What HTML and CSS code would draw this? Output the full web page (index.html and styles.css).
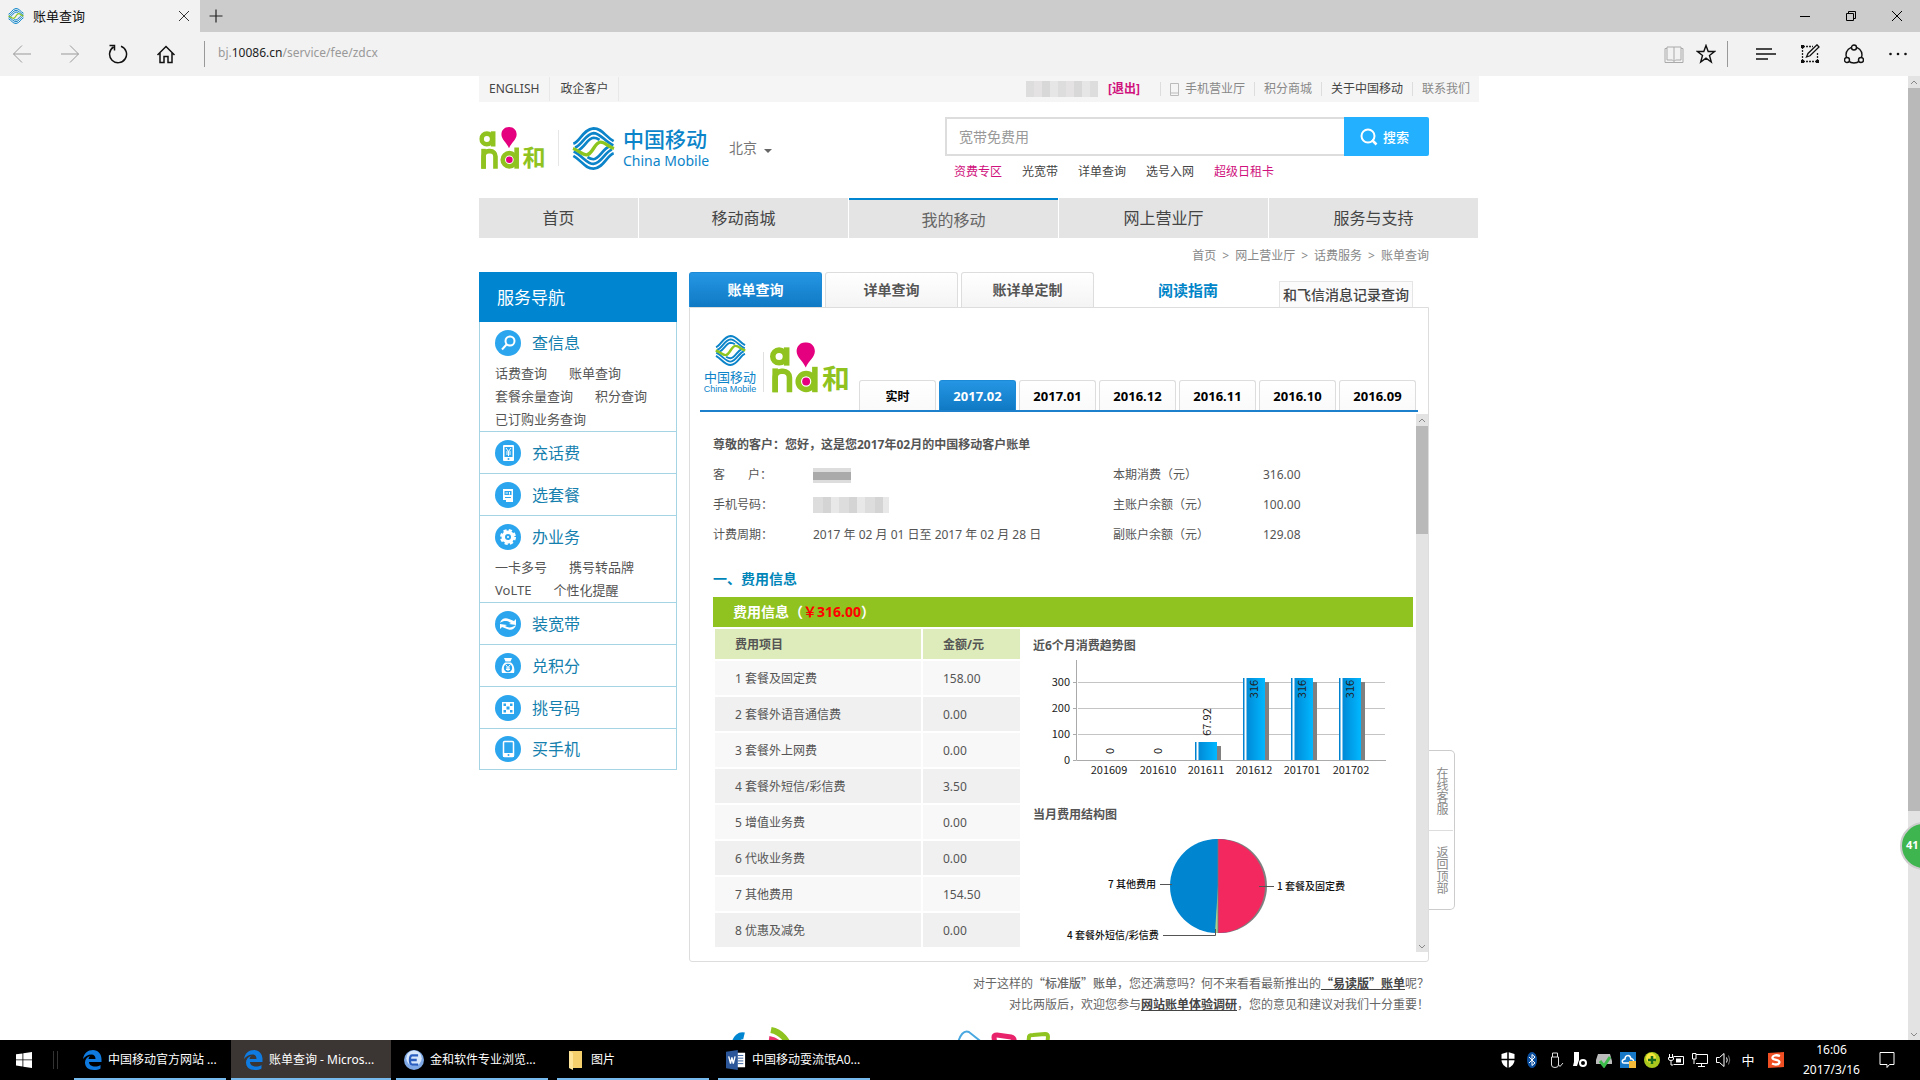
FILE: index.html
```html
<!DOCTYPE html>
<html lang="zh-CN">
<head>
<meta charset="utf-8">
<title>账单查询</title>
<link rel="stylesheet" href="styles.css">
</head>
<body>
<svg class="defs" aria-hidden="true">
  <symbol id="cm-logo" viewBox="0 0 128 128">
    <g fill="none" stroke-width="8">
      <g id="cm-half" stroke="#0c84c9">
        <path d="M4 50C24 44 34 6 64 4C90 4 98 28 124 42"/>
        <path d="M9 61C30 54 40 20 64 18C84 18 96 42 123 55"/>
        <path d="M18 70C38 60 46 34 64 32C72 32 76 34 82 38"/>
      </g>
      <use href="#cm-half" transform="rotate(180 64 64)"/>
      <path stroke="#8cc51f" stroke-width="10" d="M3 64C22 70 30 84 44 83C62 80 66 48 84 45C98 44 106 58 125 64"/>
    </g>
  </symbol>
  <symbol id="and-logo" viewBox="0 0 204 130">
    <clipPath id="and-clip"><rect x="0" y="58" width="60" height="68"/></clipPath>
    <g fill="none" stroke="#90c31f" stroke-width="14">
      <circle cx="23" cy="36" r="16"/>
      <rect x="13" y="73" width="36" height="90" rx="16" clip-path="url(#and-clip)"/>
      <circle cx="91" cy="99" r="20"/>
    </g>
    <g fill="#90c31f">
      <rect x="35" y="13" width="14" height="46"/>
      <rect x="6" y="66" width="14" height="60"/>
      <rect x="106" y="62" width="14" height="64"/>
    </g>
    <path fill="#e5007f" d="M90 0C76 0 67 10 67 23C67 38 82 46 90 64C98 46 113 38 113 23C113 10 104 0 90 0Z"/>
    <circle cx="91" cy="99" r="10" fill="#e5007f"/>
  </symbol>
  <symbol id="edge" viewBox="0 0 20 20">
    <path fill="#0f7be0" d="M1 9C2 3 6 0 11 0C16 0 19.500 4 19.500 9V12H7C7 15 10 16.500 13 16.500C15 16.500 17 16 18.500 15V18.500C17 19.500 14.500 20 12 20C6 20 3 17 3 12.500C3 9.500 5 7 8 6C7 7 6.500 8 6.500 9H13.500C13.500 6 12 4.500 9.500 4.500C6 4.500 3 6.500 1 9Z"/>
  </symbol>
</svg>

<div class="desktop">
  <header class="browser">
    <div class="tabbar">
      <div class="tab">
        <svg class="tab-icon"><use href="#cm-logo"/></svg>
        <span class="tab-title">账单查询</span>
        <button class="icon-btn" aria-label="关闭标签页"><svg width="12" height="12" viewBox="0 0 12 12"><path d="M1 1L11 11M11 1L1 11" stroke="#333" fill="none"/></svg></button>
      </div>
      <button class="icon-btn new-tab" aria-label="新建标签页"><svg width="14" height="14" viewBox="0 0 14 14"><path d="M7 .5V13.500M.5 7H13.500" stroke="#222" stroke-width="1.200" fill="none"/></svg></button>
      <div class="win-buttons">
        <button class="icon-btn" aria-label="最小化"><svg width="12" height="12" viewBox="0 0 12 12"><path d="M1 6.500H11" stroke="#000" fill="none"/></svg></button>
        <button class="icon-btn" aria-label="还原"><svg width="12" height="12" viewBox="0 0 12 12"><path d="M1.500 3.500H8.500V10.500H1.500ZM3.500 3.500V1.500H10.500V8.500H8.500" stroke="#000" fill="none"/></svg></button>
        <button class="icon-btn" aria-label="关闭"><svg width="12" height="12" viewBox="0 0 12 12"><path d="M1 1L11 11M11 1L1 11" stroke="#000" fill="none"/></svg></button>
      </div>
    </div>
    <div class="toolbar">
      <div class="nav-buttons">
        <button class="icon-btn" aria-label="后退"><svg width="20" height="20" viewBox="0 0 20 20"><path d="M19 10H1.500M10 1.500L1.500 10L10 18.500" stroke="#999" fill="none"/></svg></button>
        <button class="icon-btn" aria-label="前进"><svg width="20" height="20" viewBox="0 0 20 20"><path d="M1 10H18.500M10 1.500L18.500 10L10 18.500" stroke="#999" fill="none"/></svg></button>
        <button class="icon-btn" aria-label="刷新"><svg width="20" height="20" viewBox="0 0 20 20"><path d="M13 2.200A8.500 8.500 0 1 1 5.500 3M1.500 1.500H6.500V6.500" stroke="#111" stroke-width="1.500" fill="none"/></svg></button>
        <button class="icon-btn" aria-label="主页"><svg width="20" height="20" viewBox="0 0 20 20"><path d="M1.500 11L10 2.500L18.500 11M4 9V18.500H8V12.500H12V18.500H16V9" stroke="#111" stroke-width="1.500" fill="none"/></svg></button>
      </div>
      <div class="address"><span>bj.</span><b>10086.cn</b><span>/service/fee/zdcx</span></div>
      <div class="tools">
        <button class="icon-btn" aria-label="阅读视图"><svg width="20" height="20" viewBox="0 0 20 20"><path d="M10 3V17.500M10 3H3V16H8.500L10 17.500L11.500 16H17V3ZM3 4.500H1V18.500H19V4.500H17" stroke="#aaa" fill="none"/></svg></button>
        <button class="icon-btn" aria-label="收藏"><svg width="20" height="20" viewBox="0 0 20 20"><path d="M10 1.500L12.200 7.500H18.500L13.500 11.500L15.300 18L10 14.200L4.700 18L6.500 11.500L1.500 7.500H7.800Z" stroke="#111" stroke-width="1.400" fill="none"/></svg></button>
        <span class="tool-sep"></span>
        <button class="icon-btn" aria-label="中心"><svg width="20" height="20" viewBox="0 0 20 20"><path d="M0 5H16M0 10H20M0 15H12" stroke="#111" stroke-width="1.500" fill="none"/></svg></button>
        <button class="icon-btn" aria-label="做笔记"><svg width="20" height="20" viewBox="0 0 20 20"><path d="M3 2.500H13M2.500 3V17M3 17.500H17M17.500 17V8" stroke="#222" stroke-width="1.300" stroke-dasharray="2 1" fill="none"/><path d="M1 1H4V4H1ZM1 16H4V19H1ZM16 16H19V19H16Z" fill="#111"/><path d="M6.500 13L8 9.500L17 .800L19 3L10 11.800Z" fill="#f2f2f2" stroke="#111" stroke-width="1.300"/></svg></button>
        <button class="icon-btn" aria-label="共享"><svg width="20" height="20" viewBox="0 0 20 20"><circle cx="10" cy="11" r="8" fill="none" stroke="#111" stroke-width="1.400"/><g fill="#f2f2f2" stroke="#111" stroke-width="1.400"><circle cx="10" cy="3.500" r="2.500"/><circle cx="3" cy="16" r="2.500"/><circle cx="17" cy="16" r="2.500"/></g></svg></button>
        <button class="icon-btn" aria-label="更多"><svg width="20" height="20" viewBox="0 0 20 20"><g fill="#111"><circle cx="2.500" cy="10" r="1.300"/><circle cx="10" cy="10" r="1.300"/><circle cx="17.500" cy="10" r="1.300"/></g></svg></button>
      </div>
    </div>
  </header>

  <div class="viewport">
    <div class="page">
      <div class="site">
        <div class="topbar">
          <a class="lang" href="#">ENGLISH</a>
          <a class="lang" href="#">政企客户</a>
          <span class="mosaic mosaic-user"></span>
          <a class="logout" href="#">[退出]</a>
          <nav class="top-links">
            <a href="#"><svg width="9" height="14" viewBox="0 0 9 14"><path d="M.5 1.500H8.500V13.500H.5ZM.5 11H8.500" stroke="#bbb" fill="none"/></svg>手机营业厅</a>
            <a href="#">积分商城</a>
            <a class="dark" href="#">关于中国移动</a>
            <a href="#">联系我们</a>
          </nav>
        </div>

        <div class="masthead">
          <svg class="and-mark" viewBox="0 0 204 130"><use href="#and-logo"/><text class="and-he" x="131" y="119">和</text></svg>
          <span class="brand-sep"></span>
          <a class="brand" href="#">
            <svg class="brand-mark"><use href="#cm-logo"/></svg>
            <span class="brand-name"><span class="brand-cn">中国移动</span><span class="brand-en">China Mobile</span></span>
          </a>
          <button class="city">北京<span class="caret"></span></button>
          <form class="search">
            <div class="search-box">
              <input class="search-input" type="text" aria-label="搜索" placeholder="宽带免费用">
              <button class="search-btn" type="button"><svg width="18" height="18" viewBox="0 0 18 18"><circle cx="8" cy="8" r="6.500" fill="none" stroke="#fff" stroke-width="2"/><path d="M12 12L16.500 16.500" stroke="#fff" stroke-width="2.500"/></svg>搜索</button>
            </div>
            <div class="hot">
              <a class="hot-pink" href="#">资费专区</a><a href="#">光宽带</a><a href="#">详单查询</a><a href="#">选号入网</a><a class="hot-pink" href="#">超级日租卡</a>
            </div>
          </form>
        </div>

        <nav class="mainnav">
          <a href="#">首页</a><a href="#">移动商城</a><a class="current" href="#">我的移动</a><a href="#">网上营业厅</a><a href="#">服务与支持</a>
        </nav>

        <div class="crumbs"><a href="#">首页</a><span>&gt;</span><a href="#">网上营业厅</a><span>&gt;</span><a href="#">话费服务</a><span>&gt;</span><a href="#">账单查询</a></div>

        <div class="main">
          <aside class="side">
            <h2 class="side-title">服务导航</h2>
            <section class="side-item">
              <a class="side-head" href="#"><svg class="side-icon" viewBox="0 0 26 26"><circle cx="13" cy="13" r="13"/><circle cx="15" cy="11" r="4.500" class="ln"/><path class="ln" d="M12 14L7 19.500"/></svg>查信息</a>
              <div class="side-links"><a href="#">话费查询</a><a href="#">账单查询</a><a href="#">套餐余量查询</a><a href="#">积分查询</a><a href="#">已订购业务查询</a></div>
            </section>
            <section class="side-item"><a class="side-head" href="#"><svg class="side-icon" viewBox="0 0 26 26"><circle cx="13" cy="13" r="13"/><rect x="8" y="5" width="11" height="16" rx="1" fill="#fff"/><path d="M9.500 7H17.500V17H9.500Z"/><path class="thin" d="M11 8L13.500 11.500L16 8M13.500 11.500V16M11 12H16M11 14H16"/><circle cx="13.500" cy="19" r="1"/></svg>充话费</a></section>
            <section class="side-item"><a class="side-head" href="#"><svg class="side-icon" viewBox="0 0 26 26"><circle cx="13" cy="13" r="13"/><path fill="#fff" d="M8 7H18V20H11V18H8Z"/><path d="M9.500 9H16.500V13H9.500ZM10 15H16V16H10Z"/><path class="thin" d="M10.500 11H13M14.500 10V12.500"/></svg>选套餐</a></section>
            <section class="side-item">
              <a class="side-head" href="#"><svg class="side-icon" viewBox="0 0 26 26"><circle cx="13" cy="13" r="13"/><circle cx="13" cy="13" r="6.500" fill="#fff"/><circle cx="13" cy="13" r="6.500" fill="none" stroke="#fff" stroke-width="3" stroke-dasharray="3 2.100"/><circle cx="13" cy="13" r="3"/><circle cx="13" cy="13" r="1" fill="#fff"/></svg>办业务</a>
              <div class="side-links"><a href="#">一卡多号</a><a href="#">携号转品牌</a><a href="#">VoLTE</a><a href="#">个性化提醒</a></div>
            </section>
            <section class="side-item"><a class="side-head" href="#"><svg class="side-icon" viewBox="0 0 26 26"><circle cx="13" cy="13" r="13"/><path fill="#fff" d="M5 12C6 8 10 6 14 8L19 10L21 8V14L14 13L16 12C13 10 9 9 5 12ZM21 14C20 18 16 20 12 18L7 16L5 18V13L12 14L10 15C13 17 17 17 21 14Z"/></svg>装宽带</a></section>
            <section class="side-item"><a class="side-head" href="#"><svg class="side-icon" viewBox="0 0 26 26"><circle cx="13" cy="13" r="13"/><path fill="#fff" d="M9 5H17L15.500 8.500H10.500ZM10 9.500H16C19 12 20 16 19 20H7C6 16 7 12 10 9.500Z"/><circle cx="13" cy="15" r="4.200"/><path class="thin" d="M11 12L13 14.500L15 12M13 14.500V18M11 15H15M11 16.500H15"/></svg>兑积分</a></section>
            <section class="side-item"><a class="side-head" href="#"><svg class="side-icon" viewBox="0 0 26 26"><circle cx="13" cy="13" r="13"/><path fill="#fff" d="M7 7H19V19H7Z"/><path d="M8.500 8.500H11V11H8.500ZM15 8.500H17.500V11H15ZM11.500 11.500H14.500V14.500H11.500ZM8.500 15H11V17.500H8.500ZM15 15H17.500V17.500H15Z"/></svg>挑号码</a></section>
            <section class="side-item"><a class="side-head" href="#"><svg class="side-icon" viewBox="0 0 26 26"><circle cx="13" cy="13" r="13"/><rect x="8.500" y="5.500" width="10" height="15" rx="1" fill="none" stroke="#fff" stroke-width="1.500"/><path fill="#fff" d="M8 17H19V21H8Z"/><circle cx="13.500" cy="19" r="1"/></svg>买手机</a></section>
          </aside>

          <main class="content">
            <div class="tabs">
              <a class="ptab on" href="#">账单查询</a><a class="ptab" href="#">详单查询</a><a class="ptab" href="#">账详单定制</a>
              <a class="guide" href="#">阅读指南</a>
              <a class="fetion" href="#">和飞信消息记录查询</a>
            </div>
            <div class="panel">
              <div class="panel-head">
                <div class="mini-brand">
                  <svg class="mini-mark"><use href="#cm-logo"/></svg>
                  <span class="mini-cn">中国移动</span>
                  <span class="mini-en">China Mobile</span>
                </div>
                <span class="mini-sep"></span>
                <svg class="mini-and" viewBox="0 0 204 130"><use href="#and-logo"/><text class="and-he" x="131" y="119">和</text></svg>
                <nav class="months">
                  <a class="now" href="#">实时</a><a class="on" href="#">2017.02</a><a href="#">2017.01</a><a href="#">2016.12</a><a href="#">2016.11</a><a href="#">2016.10</a><a href="#">2016.09</a>
                </nav>
              </div>
              <div class="bill">
                <div class="bill-body">
                  <p class="greeting">尊敬的客户：您好，这是您2017年02月的中国移动客户账单</p>
                  <dl class="info">
                    <dt class="spread"><span>客</span><span>户：</span></dt><dd><span class="mosaic mosaic-name"></span></dd>
                    <dt>本期消费（元）</dt><dd>316.00</dd>
                    <dt>手机号码：</dt><dd><span class="mosaic mosaic-phone"></span></dd>
                    <dt>主账户余额（元）</dt><dd>100.00</dd>
                    <dt>计费周期：</dt><dd>2017 年 02 月 01 日至 2017 年 02 月 28 日</dd>
                    <dt>副账户余额（元）</dt><dd>129.08</dd>
                  </dl>
                  <h3 class="section-title">一、费用信息</h3>
                  <div class="fee-bar">费用信息（<span class="fee-total">￥316.00</span>）</div>
                  <div class="fee-grid">
                    <table class="fees">
                      <thead><tr><th>费用项目</th><th>金额/元</th></tr></thead>
                      <tbody>
                        <tr><td>1 套餐及固定费</td><td>158.00</td></tr>
                        <tr><td>2 套餐外语音通信费</td><td>0.00</td></tr>
                        <tr><td>3 套餐外上网费</td><td>0.00</td></tr>
                        <tr><td>4 套餐外短信/彩信费</td><td>3.50</td></tr>
                        <tr><td>5 增值业务费</td><td>0.00</td></tr>
                        <tr><td>6 代收业务费</td><td>0.00</td></tr>
                        <tr><td>7 其他费用</td><td>154.50</td></tr>
                        <tr><td>8 优惠及减免</td><td>0.00</td></tr>
                      </tbody>
                    </table>
                    <div class="charts">
                      <h4 class="chart-title">近6个月消费趋势图</h4>
                      <svg class="chart" viewBox="0 0 380 130" width="380" height="130">
                        <defs><linearGradient id="bar"><stop offset="0" stop-color="#0080cf"/><stop offset="1" stop-color="#00b8ff"/></linearGradient></defs>
                        <path d="M45 25.500H352M45 51.500H352M45 77.500H352" stroke="#c4c4c4" fill="none"/>
                        <path d="M43.500 3V103.500H353M40 25.500H43M40 51.500H43M40 77.500H43M40 103.500H43" stroke="#aaa" fill="none"/>
                        <g fill="#808080"><path d="M184 89H188V103H184ZM232 25H236V103H232ZM280 25H284V103H280ZM328 25H332V103H328Z"/></g>
                        <g fill="url(#bar)">
                          <rect x="162" y="85" width="22" height="18"/><rect x="210" y="21" width="22" height="82"/><rect x="258" y="21" width="22" height="82"/><rect x="306" y="21" width="22" height="82"/>
                        </g>
                        <path d="M164.500 85V103M212.500 21V103M260.500 21V103M308.500 21V103" stroke="#fff" stroke-width="2" fill="none"/>
                        <g class="axis end"><text x="37" y="29">300</text><text x="37" y="55">200</text><text x="37" y="81">100</text><text x="37" y="107">0</text></g>
                        <g class="axis mid">
                          <text x="76" y="117">201609</text><text x="125" y="117">201610</text><text x="173" y="117">201611</text><text x="221" y="117">201612</text><text x="269" y="117">201701</text><text x="318" y="117">201702</text>
                          <text transform="translate(81 94) rotate(-90)">0</text><text transform="translate(129 94) rotate(-90)">0</text>
                          <text transform="translate(178 65) rotate(-90)">67.92</text>
                          <text transform="translate(225 32) rotate(-90)">316</text><text transform="translate(273 32) rotate(-90)">316</text><text transform="translate(321 32) rotate(-90)">316</text>
                        </g>
                      </svg>
                      <h4 class="chart-title second">当月费用结构图</h4>
                      <svg class="chart" viewBox="0 0 380 126" width="380" height="126">
                        <circle cx="187" cy="60" r="47" fill="#808080"/>
                        <circle cx="184" cy="60" r="47" fill="#0085d0"/>
                        <path d="M185 13A47 47 0 0 1 185 107Z" fill="#f2285f"/>
                        <path d="M185 60V107H182Z" fill="#a9d18e"/>
                        <path d="M185 13V107" stroke="#777" stroke-width=".8"/>
                        <path d="M127 58.500H139M226 60.500H241M130 109.500H182.500V103" stroke="#555" fill="none"/>
                        <g class="pie-label"><text x="75" y="62">7 其他费用</text><text x="244" y="64">1 套餐及固定费</text><text x="34" y="113">4 套餐外短信/彩信费</text></g>
                      </svg>
                    </div>
                  </div>
                </div>
                <div class="scrollbar inner-scroll"><svg width="12" height="12" viewBox="0 0 12 12"><path d="M3 8L6 5L9 8"/></svg><span class="thumb"></span><svg width="12" height="12" viewBox="0 0 12 12"><path d="M3 5L6 8L9 5"/></svg></div>
              </div>
            </div>
            <div class="float-bar"><a href="#">在线客服</a><a href="#">返回顶部</a></div>
          </main>
        </div>

        <div class="notes">
          <p>对于这样的<b>“标准版”账单</b>，您还满意吗？何不来看看最新推出的<a href="#">“易读版”账单</a>呢？</p>
          <p>对比两版后，欢迎您参与<a href="#">网站账单体验调研</a>，您的意见和建议对我们十分重要！</p>
        </div>
        <svg class="partners" viewBox="0 0 700 40" width="700" height="40">
          <g fill="none">
            <path d="M7 18C8 12 12 9 16 10" stroke="#0085d0" stroke-width="7"/>
            <path d="M43 4C53 6 60 14 62 24" stroke="#8fc31f" stroke-width="6"/>
            <path d="M41 13C48 14 53 18 54 26" stroke="#e8336d" stroke-width="6"/>
            <path d="M229 20C232 8 236 4 241 6L256 18" stroke="#4aa8e0" stroke-width="2"/>
            <path d="M267 20L266 11Q266 9 269 9L283 11Q287 12 286 17" stroke="#e8226b" stroke-width="5"/>
            <path d="M300 20L301 11Q301 9 305 9L317 8Q320 8 320 11L319 20" stroke="#8fc31f" stroke-width="4"/>
          </g>
        </svg>
      </div>
    </div>
    <div class="scrollbar page-scroll"><svg width="12" height="12" viewBox="0 0 12 12"><path d="M3 8L6 5L9 8"/></svg><span class="thumb"></span><svg width="12" height="12" viewBox="0 0 12 12"><path d="M3 5L6 8L9 5"/></svg></div>
    <div class="speed-ball">41</div>
  </div>

  <footer class="taskbar">
    <button class="icon-btn start" aria-label="开始"><svg width="16" height="16" viewBox="0 0 16 16"><path fill="#fff" d="M0 2.300L6.500 1.400V7.500H0ZM7.300 1.300L16 0V7.500H7.300ZM0 8.300H6.500V14.500L0 13.600ZM7.300 8.300H16V16L7.300 14.700Z"/></svg></button>
    <span class="grip"></span>
    <div class="apps">
      <button class="app"><svg width="20" height="20"><use href="#edge"/></svg>中国移动官方网站 ...</button>
      <button class="app active"><svg width="20" height="20"><use href="#edge"/></svg>账单查询 - Micros...</button>
      <button class="app"><svg width="20" height="20" viewBox="0 0 22 22"><circle cx="11" cy="11" r="11" fill="#7fa9e6"/><circle cx="11" cy="9" r="8.500" fill="#d6e6fb"/><path d="M15.500 6H9C7 6 6.500 8 6.500 11C6.500 14 7 16 9 16H15.500M7 11H14" stroke="#2a5fc0" stroke-width="2.500" fill="none"/></svg>金和软件专业浏览...</button>
      <button class="app"><svg width="20" height="20" viewBox="0 0 20 20"><path fill="#f5cf6b" d="M4 1H17V18H4Z"/><path fill="#ffe59a" d="M4 1L8 3V20L4 18Z"/></svg>图片</button>
      <button class="app"><svg width="20" height="20" viewBox="0 0 22 22"><path fill="#fff" d="M12 3H21V19H12Z"/><path d="M13 6H19M13 9H19M13 12H19M13 15H19" stroke="#2b579a"/><path fill="#2b579a" d="M0 2L13 0V22L0 20Z"/><path d="M3 7L5 15L6.500 8L8 15L10 7" stroke="#fff" stroke-width="1.500" fill="none"/></svg>中国移动耍流氓A0...</button>
    </div>
    <div class="tray">
      <svg viewBox="0 0 16 16"><path fill="#fff" d="M8 0L14.500 2V8C14.500 12 11 15 8 16C5 15 1.500 12 1.500 8V2Z"/><path d="M8 0V16M1 7.500H15" stroke="#000" stroke-width="1.500"/></svg>
      <svg viewBox="0 0 16 16"><ellipse cx="8" cy="8" rx="5" ry="8" fill="#0a4fa0"/><path d="M5 5L11 11L8 13.500V2.500L11 5L5 11" stroke="#fff" fill="none"/></svg>
      <svg viewBox="0 0 16 16"><path d="M4.500 5V1H9.500V5M3.500 5H10.500V13Q10.500 15.500 7 15.500Q3.500 15.500 3.500 13ZM10 12L12 14.500L15 11" stroke="#ddd" fill="none"/></svg>
      <svg viewBox="0 0 16 16"><path fill="#fff" d="M2 0H7V8L5 14H1L2 10Z"/><circle cx="11" cy="11" r="3" fill="none" stroke="#fff" stroke-width="2"/></svg>
      <svg viewBox="0 0 16 16"><path fill="#bbb" d="M2 2H14L16 9V12H0V8Z"/><path d="M4 9L8 14L14 5" stroke="#3dbb4a" stroke-width="3" fill="none"/></svg>
      <svg viewBox="0 0 16 16"><path fill="#1878c8" d="M0 0H16V16H0Z"/><path d="M4 11H12C15 10 13 6 11 7C10 2 5 3 5 7C1 8 2 11 4 11Z" stroke="#fff" stroke-width="1.500" fill="none"/><path fill="#f5b93a" d="M9 9H16V16H9Z"/></svg>
      <svg viewBox="0 0 16 16"><circle cx="8" cy="8" r="8" fill="#a8c81e"/><circle cx="7" cy="6" r="5" fill="#f6e53a"/><path d="M8 4V12M4 8H12" stroke="#176b1c" stroke-width="2.500"/></svg>
      <svg viewBox="0 0 16 16"><path d="M5.500 4.500H15.500V12.500H5.500M1.500 2V5M4.500 2V5M.5 5.500H5.500V7Q5.500 8.500 3 8.500Q.5 8.500 .5 7ZM3 9V13H5" stroke="#fff" fill="none"/><path fill="#fff" d="M8 6.500H13V10.500H8Z"/></svg>
      <svg viewBox="0 0 16 16"><path d="M4 2.500H15.500V11.500H4M9.500 12V14.500M6 14.500H13M.5 1.500H4V7H.5ZM2 7V12" stroke="#fff" fill="none"/></svg>
      <svg viewBox="0 0 16 16"><path d="M.5 5.500H3.500L8 1.500V14.500L3.500 10.500H.5ZM10.500 5.500Q12 8 10.500 10.500" stroke="#fff" fill="none"/><path d="M12.500 3.500Q15 8 12.500 12.500" stroke="#777" fill="none"/></svg>
      <span class="ime">中</span>
      <svg class="sogou" viewBox="0 0 16 16"><path fill="#f04e23" d="M0 1L16 0V15L0 16Z"/><path d="M12 4C8 2.500 4 3.500 4.500 6C5 8.500 11.500 7.500 11.500 10C11.500 13 7 13 4 11.500" stroke="#fff" stroke-width="2.300" fill="none"/></svg>
      <div class="clock"><span>16:06</span><span>2017/3/16</span></div>
      <svg viewBox="0 0 16 16"><path d="M1 .5H15V12.500H10.500L8 15.500V12.500H1Z" stroke="#fff" fill="none"/></svg>
    </div>
  </footer>
</div>
</body>
</html>
```

FILE: styles.css
```css
*{box-sizing:border-box}
body{margin:0;font-family:"Noto Sans","Noto Sans CJK SC",sans-serif;font-size:12px;line-height:18px;color:#555;background:#fff;text-spacing-trim:space-all}
h2,h3,h4,p,dl,dd{margin:0}
a{color:inherit;text-decoration:none}
button{font:inherit;color:inherit;border:0;padding:0;background:none}
svg{display:block;flex:none}
.defs{position:absolute;width:0;height:0}
.and-he{font:700 70px "Noto Sans CJK SC",sans-serif;fill:#90c31f}

.desktop{display:flex;flex-direction:column;height:100vh;overflow:hidden}
.icon-btn{display:flex;align-items:center;justify-content:center;flex:none}

/* browser chrome */
.tabbar{display:flex;height:32px;background:#ccc}
.tab{display:flex;align-items:center;width:200px;padding:0 10px 0 8px;background:#f2f2f2}
.tab-icon{width:16px;height:16px}
.tab-title{flex:1;margin-left:9px;font-size:13px;color:#111}
.new-tab{width:32px}
.win-buttons{display:flex;margin-left:auto}
.win-buttons .icon-btn{width:46px}
.toolbar{display:flex;align-items:center;height:44px;background:#f2f2f2}
.nav-buttons{display:flex;gap:28px;padding:0 28px 0 12px}
.address{padding:0 0 2px 13px;border-left:1px solid #999;line-height:24px;color:#999}
.address b{font-weight:400;color:#222}
.tools{display:flex;align-items:center;margin-left:auto;padding-right:12px;gap:24px}
.tools .icon-btn:first-child{margin-right:-12px}
.tool-sep{width:1px;height:26px;margin:0 4px 0 -13px;background:#999}

/* page frame */
.viewport{position:relative;display:flex;flex:1;min-height:0;overflow:hidden}
.page{flex:1;min-width:0;overflow:hidden}
.site{width:950px;margin:0 auto}
.scrollbar{display:flex;flex-direction:column;width:12px;background:#e3e3e3}
.scrollbar svg path{fill:none;stroke:#888}
.scrollbar svg:last-child{margin-top:auto}
.thumb{background:#b9b9b9}
.page-scroll .thumb{height:75%}
.speed-ball{position:absolute;right:-28px;top:746px;width:48px;height:48px;padding-left:4px;border:2px solid #ccc;border-radius:50%;background:#3fb54f;color:#fff;font-size:11px;font-weight:700;line-height:42px}

.topbar{display:flex;align-items:center;height:26px;margin-right:-50px;background:#f5f5f5;color:#888}
.lang{padding:0 10px;line-height:24px;border-right:1px solid #e8e8e8;color:#444}
.mosaic{display:block}
.mosaic-user{width:72px;height:16px;margin-left:auto;background:repeating-linear-gradient(90deg,#ddd 0 8px,#e4e2e2 8px 16px,#d8d8d8 16px 24px,#e6e6e6 24px 32px)}
.logout{margin:0 20px 0 10px;font-weight:700;color:#d0107c}
.top-links{display:flex}
.top-links a{display:flex;align-items:center;gap:6px;padding:0 9px;line-height:14px;border-left:1px solid #ddd}
.top-links .dark{color:#444}

.masthead{display:flex;align-items:flex-start;height:96px}
.and-mark{width:68px;height:43px;margin-top:25px}
.brand-sep{width:1px;height:36px;margin:28px 13px 0 11px;background:#e6e6e6}
.brand{display:flex;gap:8px;margin-top:25px;color:#0c84c9}
.brand-mark{width:43px;height:43px}
.brand-name{display:flex;flex-direction:column;width:86px;gap:2px;white-space:nowrap}
.brand-cn{font-size:21px;line-height:24px;font-weight:500}
.brand-en{font-size:14px;line-height:16px}
.city{display:flex;align-items:center;gap:7px;margin:36px 0 0 20px;font-size:14px;line-height:20px;color:#777}
.caret{margin-top:6px;border:4px solid transparent;border-top-color:#666;border-bottom:0}
.search{width:484px;margin:15px 0 0 auto}
.search-box{display:flex;height:39px}
.search-input{flex:1;min-width:0;padding:0 12px;border:2px solid #ddd;border-right:0;font:14px "Noto Sans","Noto Sans CJK SC",sans-serif}
.search-input::placeholder{color:#999}
.search-btn{display:flex;align-items:center;justify-content:center;gap:5px;width:85px;padding-right:4px;border-radius:0 2px 2px 0;background:#23b1ff;color:#fff;font-size:13px;font-weight:500}
.hot{display:flex;gap:20px;padding:7px 9px 0;color:#444}
.hot-pink{color:#d0107c}

.mainnav{display:grid;grid-template-columns:159px repeat(4,1fr);gap:1px;margin-right:-49px}
.mainnav a{height:40px;background:#e4e4e4;font-size:16px;line-height:40px;text-align:center;color:#444}
.mainnav .current{border-top:2px solid #0085d0;color:#666}
.crumbs{display:flex;justify-content:flex-end;gap:6px;padding-top:2px;line-height:32px;color:#888}

.main{display:grid;grid-template-columns:198px 1fr;gap:12px;align-items:start}
.side{border:1px solid #a5d5e5;border-top:0}
.side-title{margin:0 -1px;padding:2px 0 0 18px;background:#0085d0;color:#fff;font-size:17px;font-weight:400;line-height:48px}
.side-item + .side-item{border-top:1px solid #a5d5e5}
.side-head{display:flex;align-items:center;gap:11px;height:41px;padding-left:15px;font-size:16px;color:#1580ae}
.side-item:last-child .side-head{height:40px}
.side-icon{width:26px;height:26px;fill:#2ba6ee}
.side-icon .ln{fill:none;stroke:#fff;stroke-width:2}
.side-icon .thin{fill:none;stroke:#fff;stroke-width:1}
.side-links{display:flex;flex-wrap:wrap;column-gap:22px;margin-top:-1px;padding-left:15px;font-size:13px;line-height:23px}

.content{position:relative}
.tabs{display:flex;align-items:flex-end;height:35px}
.ptab{width:133px;height:35px;margin-right:3px;border:1px solid #ddd;border-bottom:0;border-radius:3px 3px 0 0;background:linear-gradient(#fff,#f4f4f4);font-size:14px;font-weight:700;line-height:34px;text-align:center;color:#555}
.ptab.on{border-color:#1c8ad6;background:linear-gradient(#2596e4,#1079c4);color:#fff}
.guide{margin-left:61px;font-size:15px;font-weight:700;line-height:34px;color:#0085c8}
.fetion{margin-left:61px;padding:0 3px;border:1px solid #e5e5e5;border-bottom:0;background:#fbfbfb;font-size:14px;font-weight:500;line-height:25px;color:#444}
.panel{padding-bottom:9px;border:1px solid #ddd;border-radius:0 0 3px 3px}
.panel-head{display:flex;align-items:flex-end;height:104px;margin:0 10px;border-bottom:2px solid #1c80cc}
.mini-brand{display:flex;flex-direction:column;align-items:center;width:52px;margin:0 7px 15px 4px;color:#0c84c9}
.mini-mark{width:31px;height:31px;margin-bottom:4px}
.mini-cn{font-size:13px;line-height:14px}
.mini-en{font-family:"Liberation Sans",sans-serif;font-size:9px;line-height:11px;white-space:nowrap}
.mini-sep{width:1px;height:40px;margin:0 6px 18px 0;background:#e0e0e0}
.mini-and{width:81px;height:52px;margin-bottom:16px}
.months{display:flex;gap:3px;margin:0 2px 0 auto}
.months a{width:77px;height:30px;border:1px solid #ddd;border-bottom:0;border-radius:3px 3px 0 0;background:linear-gradient(#fff,#fafafa);font-size:13px;font-weight:700;line-height:31px;text-align:center;color:#000}
.months .now{font-size:12px}
.months .on{border-color:#1c8ad6;background:linear-gradient(#2596e4,#1079c4);color:#fff}

.bill{display:flex;margin-top:2px}
.bill-body{flex:1;min-width:0;padding:16px 3px 0 23px}
.inner-scroll .thumb{height:20%}
.greeting{font-weight:700;line-height:30px}
.info{display:grid;grid-template-columns:100px 300px 150px 1fr;line-height:30px}
.info dd{display:flex;align-items:center}
.spread{display:flex;gap:23px}
.mosaic-name{width:38px;height:15px;background:linear-gradient(#ddd 0 4px,#aaa 4px 12px,#ddd 12px)}
.mosaic-phone{width:76px;height:16px;background:repeating-linear-gradient(90deg,#ddd 0 10px,#d4d4d4 10px 18px,#e8e8e8 18px 26px)}
.section-title{margin:14px 0 3px;font-size:14px;line-height:30px;color:#0085b8}
.fee-bar{padding-left:20px;background:#90c31f;color:#fff;font-size:14px;font-weight:700;line-height:30px}
.fee-total{color:#f00}
.fee-grid{display:grid;grid-template-columns:309px 1fr;gap:11px;align-items:start}
.fees{width:100%;border-spacing:2px;table-layout:fixed}
.fees th,.fees td{height:34px;padding:2px 0 0 20px;text-align:left;background:#f8f8f8}
.fees th{height:30px;background:#ddecba}
.fees th:last-child{width:97px}
.fees tbody tr:nth-child(even) td{background:#f0f0f0}
.charts{padding-top:8px}
.chart-title{font-size:12px;line-height:22px}
.second{margin-top:17px}
.chart{max-width:100%}
.axis{font:11px "Noto Sans CJK SC",sans-serif;fill:#222}
.end{text-anchor:end}
.mid{text-anchor:middle}
.pie-label{font:500 10px "Noto Sans CJK SC",sans-serif;fill:#111}
.float-bar{position:absolute;left:100%;top:478px;width:26px;border:1px solid #ccc;border-left:0;border-radius:0 5px 5px 0;background:#fff;color:#888}
.float-bar a{display:flex;align-items:center;justify-content:center;height:79px;writing-mode:vertical-rl;line-height:24px}
.float-bar a + a{border-top:1px solid #ddd}

.notes{padding-top:10px;font-family:"Noto Sans CJK SC",sans-serif;line-height:21px;text-align:right;color:#666}
.notes a{font-weight:700;text-decoration:underline;color:#444}
.notes b{font-weight:500}
.partners{margin:12px 0 0 249px}

/* taskbar */
.taskbar{display:flex;height:40px;background:#000;color:#fff}
.start{width:48px}
.grip{width:5px;height:18px;margin:11px 17px 0 5px;border:1px solid #333;border-width:0 1px}
.apps{display:flex;gap:1px;margin-left:-5px}
.app{display:flex;align-items:center;gap:6px;width:160px;padding:0 4px 0 12px;background:linear-gradient(#76b9ed,#76b9ed) 4px 100%/152px 2px no-repeat;text-align:left;white-space:nowrap}
.app.active{background:linear-gradient(#76b9ed,#76b9ed) 0 100%/100% 2px no-repeat #3b3533}
.tray{display:flex;align-items:center;gap:8px;margin-left:auto;padding-right:25px}
.tray svg{width:16px;height:16px}
.ime{width:16px;text-align:center;font-size:13px}
.tray .sogou{margin-left:4px}
.clock{display:flex;flex-direction:column;width:79px;text-align:center;line-height:20px}
```
